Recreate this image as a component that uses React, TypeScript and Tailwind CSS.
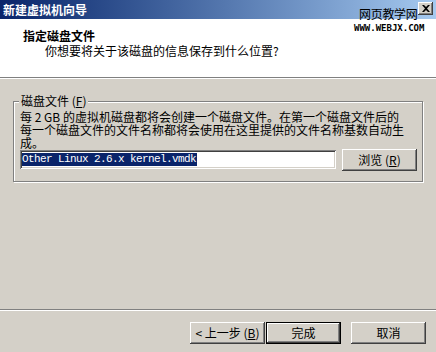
import React from "react";

const FONT = { fontFamily: '"Noto Sans CJK SC", "Noto Sans", sans-serif' };

function Btn({ children, isDefault = false }: { children: React.ReactNode; isDefault?: boolean }) {
  return (
    <div
      className={
        "w-[75px] h-[22px] flex items-center justify-center text-[12px] leading-none text-black bg-[#d4d0c8] " +
        (isDefault
          ? "border border-black shadow-[inset_-1px_-1px_#404040,inset_1px_1px_#fff,inset_-2px_-2px_#808080]"
          : "shadow-[inset_-1px_-1px_#404040,inset_1px_1px_#fff,inset_-2px_-2px_#808080]")
      }
    >
      {children}
    </div>
  );
}

export default function App() {
  return (
    <div className="relative w-[436px] h-[352px] bg-[#d4d0c8] flex flex-col overflow-hidden" style={FONT}>
      {/* Title bar */}
      <div className="h-[19px] bg-gradient-to-r from-[#0a246a] to-[#a6caf0] flex items-center pl-[3px]">
        <span className="text-white font-bold text-[12px] leading-none">新建虚拟机向导</span>
      </div>

      {/* Close button */}
      <div className="absolute left-[418px] top-[2px] w-[15px] h-[13px] bg-[#d4d0c8] shadow-[inset_-1px_-1px_#404040,inset_1px_1px_#fff,inset_-2px_-2px_#808080] flex items-center justify-center">
        <svg width="8" height="7" viewBox="0 0 8 7">
          <path d="M0 0h2l2 2 2-2h2L5 3.5 8 7H6L4 5 2 7H0l3-3.5z" fill="#000" />
        </svg>
      </div>

      {/* Watermark */}
      <div className="absolute left-[359px] top-[7px] text-[12px] leading-[13px] text-black tracking-[-0.3px]">
        网页教学网
      </div>
      <div
        className="absolute left-[354px] top-[24px] text-[9px] leading-[9px] font-bold text-black"
        style={{ fontFamily: '"DejaVu Sans Mono", monospace' }}
      >
        WWW.WEBJX.COM
      </div>

      {/* Header */}
      <div className="h-[58px] bg-white pt-[10px] text-[12px] leading-[13px] text-black">
        <div className="pl-[23px] font-bold">指定磁盘文件</div>
        <div className="pl-[45px] mt-[2px]">你想要将关于该磁盘的信息保存到什么位置?</div>
      </div>
      <div className="h-[2px] border-t border-[#808080] border-b border-b-white" />

      {/* Body */}
      <div className="px-[13px] pt-[22px]">
        <div className="relative h-[81px] border border-[#808080] shadow-[inset_1px_1px_#fff,1px_1px_#fff] pl-[6px] pt-[8px]">
          <div className="absolute left-[5px] top-[-8px] bg-[#d4d0c8] px-[2px] text-[12px] leading-[13px] text-black">
            磁盘文件 (<span className="underline">F</span>)
          </div>
          <div className="text-[12px] leading-[13px] text-black whitespace-nowrap">
            每 2 GB 的虚拟机磁盘都将会创建一个磁盘文件。在第一个磁盘文件后的
            <br />
            每一个磁盘文件的文件名称都将会使用在这里提供的文件名称基数自动生
            <br />
            成。
          </div>
          <div className="flex items-start">
            <div className="w-[316px] h-[19px] mt-[1px] bg-white shadow-[inset_1px_1px_#808080,inset_-1px_-1px_#fff,inset_2px_2px_#404040,inset_-2px_-2px_#d4d0c8] pl-[2px] flex items-center">
              <span
                className="bg-[#0a246a] text-white text-[11px] leading-[13px] tracking-[-0.6px] h-[13px] pr-[1px] whitespace-pre"
                style={{ fontFamily: '"Liberation Mono", monospace' }}
              >
                Other Linux 2.6.x kernel.vmdk
              </span>
            </div>
            <div className="ml-[6px]">
              <Btn>
                浏览 (<span className="underline">R</span>)
              </Btn>
            </div>
          </div>
        </div>
      </div>

      <div className="flex-1" />

      {/* Bottom separator */}
      <div className="h-[2px] border-t border-[#808080] border-b border-b-white" />

      {/* Buttons */}
      <div className="flex justify-end items-start pt-[11px] pb-[8px] pr-[10px]">
        <Btn>
          &lt; 上一步 (<span className="underline">B</span>)
        </Btn>
        <div className="ml-[1px]">
          <Btn isDefault>完成</Btn>
        </div>
        <div className="ml-[10px]">
          <Btn>取消</Btn>
        </div>
      </div>
    </div>
  );
}
